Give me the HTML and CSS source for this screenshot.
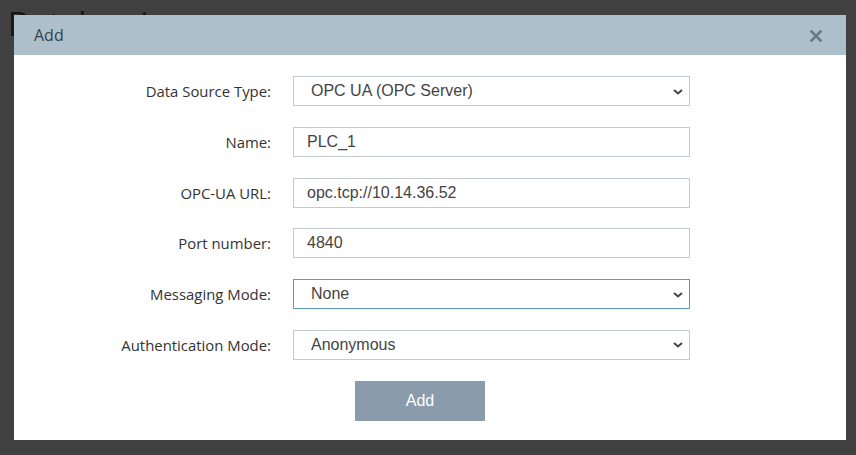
FILE: index.html
```html
<!DOCTYPE html>
<html>
<head>
<meta charset="utf-8">
<link rel="stylesheet" href="styles.css">
</head>
<body>
<h1 class="page-title">Datalogging</h1>
<div class="modal">
  <div class="modal-header">
    <span class="modal-title">Add</span>
    <svg class="modal-close" viewBox="0 0 12 12" width="12" height="12"><path d="M1.5 1.5 L10.5 10.5 M10.5 1.5 L1.5 10.5" stroke="#6a7a88" stroke-width="2.6" stroke-linecap="square"/></svg>
  </div>
  <div class="modal-body">
    <div class="form-grid">
      <label class="lbl">Data Source Type:</label>
      <div class="select"><span>OPC UA (OPC Server)</span><svg class="chev" viewBox="0 0 10 6" width="10" height="6"><path d="M1 1 L5 4.5 L9 1" fill="none" stroke="#444" stroke-width="2"/></svg></div>
      <label class="lbl">Name:</label>
      <div class="input">PLC_1</div>
      <label class="lbl">OPC-UA URL:</label>
      <div class="input">opc.tcp://10.14.36.52</div>
      <label class="lbl">Port number:</label>
      <div class="input">4840</div>
      <label class="lbl">Messaging Mode:</label>
      <div class="select focus"><span>None</span><svg class="chev" viewBox="0 0 10 6" width="10" height="6"><path d="M1 1 L5 4.5 L9 1" fill="none" stroke="#444" stroke-width="2"/></svg></div>
      <label class="lbl">Authentication Mode:</label>
      <div class="select"><span>Anonymous</span><svg class="chev" viewBox="0 0 10 6" width="10" height="6"><path d="M1 1 L5 4.5 L9 1" fill="none" stroke="#444" stroke-width="2"/></svg></div>
    </div>
    <div class="btn-row">
      <button class="btn-add">Add</button>
    </div>
  </div>
</div>
</body>
</html>
```
FILE: styles.css
```css
html, body {
  margin: 0;
  padding: 0;
}
body {
  background: #404040;
  width: 856px;
  height: 455px;
  overflow: hidden;
  position: relative;
  font-family: "Open Sans", "Noto Sans", sans-serif;
}
.page-title {
  margin: 0;
  padding: 4px 0 0 8px;
  font-weight: 400;
  font-size: 32px;
  line-height: 40px;
  color: #151515;
}
.modal {
  position: absolute;
  left: 14px;
  top: 15px;
  width: 832px;
  height: 425px;
  background: #ffffff;
  display: flex;
  flex-direction: column;
}
.modal-header {
  height: 40px;
  background: #adbfcb;
  display: flex;
  align-items: center;
  justify-content: space-between;
  padding: 0 24px 0 20px;
}
.modal-title {
  font-size: 16px;
  color: #35404a;
}
.modal-close {
  margin-top: 2px;
}
.modal-body {
  padding-top: 21px;
}
.form-grid {
  display: grid;
  grid-template-columns: 257px 397px;
  column-gap: 22px;
  row-gap: 20.8px;
  align-items: center;
}
.lbl {
  text-align: right;
  font-size: 14.9px;
  color: #333;
}
.input, .select {
  box-sizing: border-box;
  height: 30px;
  border: 1px solid #c3cbd0;
  font-family: "Liberation Sans", Arial, sans-serif;
  font-size: 16px;
  color: #444;
  display: flex;
  align-items: center;
}
.input {
  padding-left: 13px;
}
.select {
  padding: 0 6px 0 17px;
  justify-content: space-between;
}
.select.focus {
  border-color: #5e9db3;
}
.chev {
  margin-top: 1px;
}
.btn-row {
  display: flex;
  justify-content: center;
  padding: 21px 20px 0 0;
}
.btn-add {
  width: 130px;
  height: 40px;
  border: none;
  background: #8a9cab;
  color: #fff;
  font-family: "Liberation Sans", Arial, sans-serif;
  font-size: 16px;
  padding: 0;
}
```
